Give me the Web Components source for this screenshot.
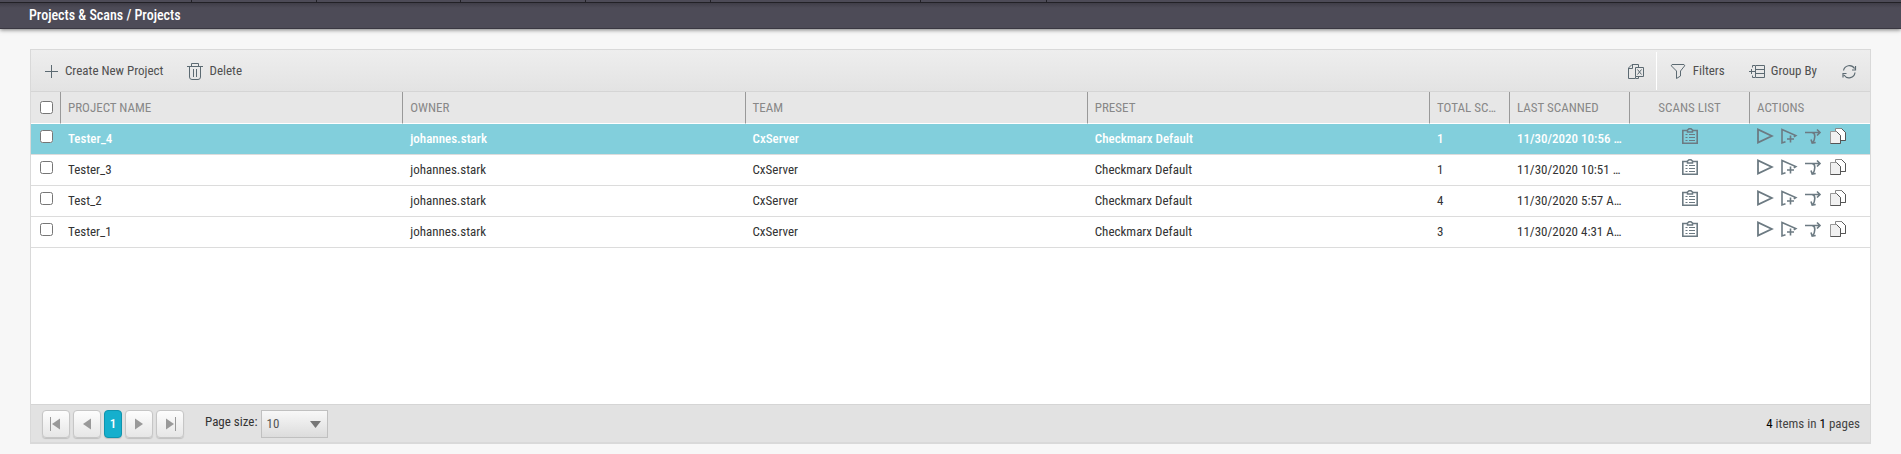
<!DOCTYPE html>
<html lang="en">
<head>
<meta charset="utf-8">
<title>Projects</title>
<style>
    html {
        height: 100%;
    }

    body {
        margin: 0;
        min-height: 100%;
        display: flex;
        flex-direction: column;
        background: #f7f7f7;
        color: #333;
        font: 13px/16px "Roboto Condensed", "Liberation Sans Narrow", Roboto, sans-serif;
    }
</style>
</head>
<body>
<page-header>Projects &amp; Scans / Projects</page-header>
<grid-panel>
    <grid-toolbar slot="toolbar"></grid-toolbar>
    <project-table></project-table>
    <grid-pager slot="footer" total="4" pages="1"></grid-pager>
</grid-panel>

<script>
// icon artwork, all stroked with currentColor unless set otherwise
const ICONS = {
    plus: '<path d="M8.5 2v13M2 8.5h13"/>',
    trash: '<path d="M0 3.5h16M4.500 3V.5h7V3M2.500 4v10q0 2.500 2.500 2.500h6q2.500 0 2.500-2.500V4M6.500 6v8M9.500 6v8"/>',
    export: '<path d="M7 15.500H.5V5L4 1.500h6.500V4M.5 5.500H4.500v-4"/><path d="M7.500 4.500h8v9h-8zM9.500 6.500l4 5M13.500 6.500l-4 5M7.500 13.500v2h3v-2"/>',
    filter: '<path d="M1 1.500h12q1 .5 .5 1.500L9.500 8v5l-4 2.500V8L.5 3Q0 2 1 1.500z"/>',
    group: '<path d="M6.500 2.500h9v12h-9zM6.500 6.500h9M6.500 10.500h9M0 8.500h6M2.500 6v5M6 2.500H3.500v2M6 14.500H3.500v-2"/>',
    refresh: '<path d="M2.500 7.500a6 6 0 0 1 11-2M14 9.500a6 6 0 0 1-11 2.500M14.500 3v4H11M2 14.500v-4h3.500" stroke-width="1.200"/>',
    list: '<path d="M5 2.500H.8v12.700h14.400V2.500H11" stroke-width="1.600"/><path d="M5.500 4V2l1.500-1.200h2L10.500 2v2z" stroke-width="1.500"/><path d="M3.500 6.500h2M7 6.500h6M3.500 9.500h2M7 9.500h6M3.500 12.500h2M7 12.500h6" stroke-width="1.200"/>',
    play: '<path d="M1 1.500v13L14.800 8z" stroke-width="1.800"/>',
    playAdd: '<path d="M4.500 13.800L1 15V1.500L14.800 7.500l-2 1.200" stroke-width="1.600"/><path d="M9.500 7.500v7M6 11h7" stroke-width="1.600"/>',
    branch: '<path d="M0 4.500h15M12 1.500l3 3-3 3M7 4.500q3 .5 2.800 4t-1.800 6M6 11.500l1.200 3.500 3.500-.5" stroke-width="1.600"/>',
    copy: '<path fill="#fff" stroke="#888" d="M6.500 3V.5h6l4 4v8H12"/><path stroke="#555" d="M12.500.5l4 4v8H12"/><path fill="#f1f1f1" stroke="#999" d="M1.500 3.500h6l4 4v8h-10z"/><path stroke="#555" d="M7.500 3.500l4 4v8h-10"/>',
    first: '<path d="M2.500 1v14" stroke="#999"/><path d="M12 2.500v11L4 8z" fill="#999" stroke="none"/>',
    prev: '<path d="M12 2.500v11L4 8z" fill="#999" stroke="none"/>',
    next: '<path d="M4 2.500v11L12 8z" fill="#999" stroke="none"/>',
    last: '<path d="M13.500 1v14" stroke="#999"/><path d="M4 2.500v11L12 8z" fill="#999" stroke="none"/>'
};

class GridIcon extends HTMLElement {
    constructor() {
        super();
        this.attachShadow({ mode: "open" });
    }

    connectedCallback() {
        const art = ICONS[this.getAttribute("name")] || "";
        this.shadowRoot.innerHTML = `
            <style>
                :host {
                    display: block;
                    width: 16px;
                    height: 17px;
                    flex: none;
                }

                svg {
                    display: block;
                    overflow: visible;
                }
            </style>
            <svg width="16" height="17" viewBox="0 0 16 17" fill="none" stroke="currentColor" aria-hidden="true">${art}</svg>
        `;
    }
}

class PageHeader extends HTMLElement {
    constructor() {
        super();
        this.attachShadow({ mode: "open" });
        this.shadowRoot.innerHTML = `
            <style>
                :host {
                    display: block;
                    background: #4d4b57;
                    box-shadow: 0 1px 4px rgba(0, 0, 0, 0.5);
                }

                /* bottom edge of the main menu */
                .menu {
                    display: grid;
                    grid-template-columns: 192px 125px 144px 125px 125px 210px 126px 1fr;
                    height: 2px;
                    border-bottom: 1px solid #222126;
                }

                .menu i {
                    border-right: 1px solid #222126;
                }

                .menu i:last-child {
                    border: 0;
                }

                h1 {
                    margin: 0;
                    padding: 4px 29px 5px;
                    border-bottom: 1px solid #3a3842;
                    background: linear-gradient(#403e48, #4d4b57 5px);
                    color: #fff;
                    font-size: 14px;
                    line-height: 16px;
                    font-weight: 500;
                }
            </style>
            <div class="menu"><i></i><i></i><i></i><i></i><i></i><i></i><i></i><i></i></div>
            <h1><slot></slot></h1>
        `;
    }
}

class GridPanel extends HTMLElement {
    constructor() {
        super();
        this.attachShadow({ mode: "open" });
        this.shadowRoot.innerHTML = `
            <style>
                :host {
                    display: flex;
                    flex-direction: column;
                    flex: 1;
                    margin: 20px 30px 10px;
                    border: 1px solid #d9d9d9;
                    border-bottom-width: 2px;
                    background: #fff;
                }

                .content {
                    flex: 1;
                }
            </style>
            <slot name="toolbar"></slot>
            <div class="content"><slot></slot></div>
            <slot name="footer"></slot>
        `;
    }
}

class GridToolbar extends HTMLElement {
    constructor() {
        super();
        this.attachShadow({ mode: "open" });
        this.shadowRoot.innerHTML = `
            <style>
                :host {
                    display: flex;
                    justify-content: space-between;
                    height: 41px;
                    border-bottom: 1px solid #d5d5d5;
                    background: linear-gradient(#eee, #e3e3e3);
                }

                .group {
                    display: flex;
                    align-items: center;
                    gap: 24px;
                    padding: 0 12px;
                }

                .group.right {
                    padding: 0 13px 0 14px;
                    border-left: 1px solid #fff;
                }

                .side {
                    display: flex;
                    padding: 2px 0 1px;
                }

                button {
                    display: flex;
                    align-items: center;
                    gap: 6px;
                    padding: 0;
                    border: 0;
                    background: none;
                    color: #505050;
                    font: inherit;
                }

                grid-icon {
                    color: #5c6a72;
                }
            </style>
            <div class="side">
                <div class="group">
                    <button><grid-icon name="plus"></grid-icon>Create New Project</button>
                    <button><grid-icon name="trash"></grid-icon>Delete</button>
                </div>
            </div>
            <div class="side">
                <div class="group"><button aria-label="Export to Excel"><grid-icon name="export"></grid-icon></button></div>
                <div class="group right">
                    <button><grid-icon name="filter"></grid-icon>Filters</button>
                    <button><grid-icon name="group"></grid-icon>Group By</button>
                    <button aria-label="Refresh"><grid-icon name="refresh"></grid-icon></button>
                </div>
            </div>
        `;
    }
}

const PROJECTS = [
    { name: "Tester_4", owner: "johannes.stark", team: "CxServer", preset: "Checkmarx Default", total: 1, last: "11/30/2020 10:56 AM", selected: true },
    { name: "Tester_3", owner: "johannes.stark", team: "CxServer", preset: "Checkmarx Default", total: 1, last: "11/30/2020 10:51 AM" },
    { name: "Test_2", owner: "johannes.stark", team: "CxServer", preset: "Checkmarx Default", total: 4, last: "11/30/2020 5:57 AM" },
    { name: "Tester_1", owner: "johannes.stark", team: "CxServer", preset: "Checkmarx Default", total: 3, last: "11/30/2020 4:31 AM" }
];

class ProjectTable extends HTMLElement {
    constructor() {
        super();
        this.attachShadow({ mode: "open" });
    }

    connectedCallback() {
        const rows = PROJECTS.map(p => `
            <tr class="${p.selected ? "selected" : ""}">
                <td class="check"><input type="checkbox" aria-label="Select ${p.name}"></td>
                <td>${p.name}</td>
                <td>${p.owner}</td>
                <td>${p.team}</td>
                <td>${p.preset}</td>
                <td>${p.total}</td>
                <td>${p.last}</td>
                <td class="icons"><div class="center"><button aria-label="Scans list"><grid-icon name="list"></grid-icon></button></div></td>
                <td class="icons"><div>
                    <button aria-label="Full scan"><grid-icon name="play"></grid-icon></button>
                    <button aria-label="Incremental scan"><grid-icon name="playAdd"></grid-icon></button>
                    <button aria-label="Branch project"><grid-icon name="branch"></grid-icon></button>
                    <button aria-label="Duplicate project"><grid-icon name="copy"></grid-icon></button>
                </div></td>
            </tr>`).join("");

        this.shadowRoot.innerHTML = `
            <style>
                :host {
                    display: block;
                }

                table {
                    width: 100%;
                    table-layout: fixed;
                    border-collapse: separate;
                    border-spacing: 0;
                }

                .c-check { width: 30px; }
                .c-total { width: 80px; }
                .c-fixed { width: 120px; }

                th, td {
                    box-sizing: border-box;
                    height: 31px;
                    padding: 0 7px;
                    text-align: left;
                    white-space: nowrap;
                    overflow: hidden;
                    text-overflow: ellipsis;
                }

                th {
                    height: 32px;
                    border-right: 1px solid #999;
                    border-bottom: 1px solid #fff;
                    background: #e7e7e7;
                    color: #888;
                    font-weight: 400;
                }

                th:last-child {
                    border-right: 0;
                }

                th.mid {
                    text-align: center;
                }

                td {
                    border-bottom: 1px solid #dcdcdc;
                }

                .selected td {
                    background: #82cfdc;
                    color: #fff;
                    font-weight: 500;
                }

                .check {
                    padding: 0 0 0 9px;
                }

                td.check, .icons {
                    vertical-align: top;
                }

                input {
                    display: block;
                    width: 13px;
                    height: 13px;
                    margin: 0;
                }

                td input {
                    margin-top: 6px;
                }

                .icons div {
                    display: flex;
                    gap: 8px;
                    padding-top: 4px;
                }

                .icons .center {
                    justify-content: center;
                }

                button {
                    padding: 0;
                    border: 0;
                    background: none;
                }

                grid-icon {
                    color: #6c7a82;
                }
            </style>
            <table>
                <colgroup>
                    <col class="c-check"><col><col><col><col>
                    <col class="c-total"><col class="c-fixed"><col class="c-fixed"><col class="c-fixed">
                </colgroup>
                <thead>
                    <tr>
                        <th class="check"><input type="checkbox" aria-label="Select all"></th>
                        <th>PROJECT NAME</th>
                        <th>OWNER</th>
                        <th>TEAM</th>
                        <th>PRESET</th>
                        <th>TOTAL SCANS</th>
                        <th>LAST SCANNED</th>
                        <th class="mid">SCANS LIST</th>
                        <th>ACTIONS</th>
                    </tr>
                </thead>
                <tbody>${rows}</tbody>
            </table>
        `;
    }
}

class GridPager extends HTMLElement {
    constructor() {
        super();
        this.attachShadow({ mode: "open" });
    }

    connectedCallback() {
        const total = this.getAttribute("total") || "0";
        const pages = this.getAttribute("pages") || "1";

        this.shadowRoot.innerHTML = `
            <style>
                :host {
                    display: flex;
                    align-items: center;
                    justify-content: space-between;
                    padding: 5px 10px 4px 11px;
                    border-top: 1px solid #d5d5d5;
                    background: #e2e2e2;
                }

                .nav, .size {
                    display: flex;
                    align-items: center;
                }

                .nav {
                    gap: 21px;
                }

                .buttons {
                    display: flex;
                    gap: 3px;
                }

                button {
                    display: flex;
                    align-items: center;
                    justify-content: center;
                    box-sizing: border-box;
                    width: 28px;
                    height: 28px;
                    padding: 0;
                    border: 1px solid #c6c6c6;
                    border-radius: 4px;
                    background: linear-gradient(#fdfdfd, #e6e6e6);
                    box-shadow: 0 1px 1px rgba(0, 0, 0, 0.15);
                    font: inherit;
                }

                button.current {
                    width: 18px;
                    border-color: #0f94ae;
                    background: #15afcd;
                    color: #fff;
                    font-weight: 500;
                }

                .size {
                    gap: 3px;
                }

                label {
                    padding-bottom: 4px;
                }

                .combo {
                    display: grid;
                    align-items: center;
                }

                select, .combo svg {
                    grid-area: 1 / 1;
                }

                select {
                    appearance: none;
                    width: 67px;
                    height: 28px;
                    padding: 0 5px;
                    border: 1px solid #c0c0c0;
                    border-radius: 0;
                    background: linear-gradient(#f8f8f8, #dcdcdc);
                    color: #555;
                    font: inherit;
                }

                .combo svg {
                    justify-self: end;
                    margin-right: 7px;
                    pointer-events: none;
                }

                .info {
                    color: #444;
                }

                b {
                    color: #000;
                    font-weight: 400;
                }
            </style>
            <div class="nav">
                <div class="buttons">
                    <button aria-label="First page"><grid-icon name="first"></grid-icon></button>
                    <button aria-label="Previous page"><grid-icon name="prev"></grid-icon></button>
                    <button class="current">1</button>
                    <button aria-label="Next page"><grid-icon name="next"></grid-icon></button>
                    <button aria-label="Last page"><grid-icon name="last"></grid-icon></button>
                </div>
                <div class="size">
                    <label for="size">Page size:</label>
                    <div class="combo">
                        <select id="size"><option>10</option><option>20</option><option>50</option></select>
                        <svg width="11" height="7" aria-hidden="true"><path d="M0 0h11L5.500 7z" fill="#777"/></svg>
                    </div>
                </div>
            </div>
            <div class="info"><b>${total}</b> items in <b>${pages}</b> pages</div>
        `;
    }
}

customElements.define("grid-icon", GridIcon);
customElements.define("page-header", PageHeader);
customElements.define("grid-panel", GridPanel);
customElements.define("grid-toolbar", GridToolbar);
customElements.define("project-table", ProjectTable);
customElements.define("grid-pager", GridPager);
</script>
</body>
</html>
